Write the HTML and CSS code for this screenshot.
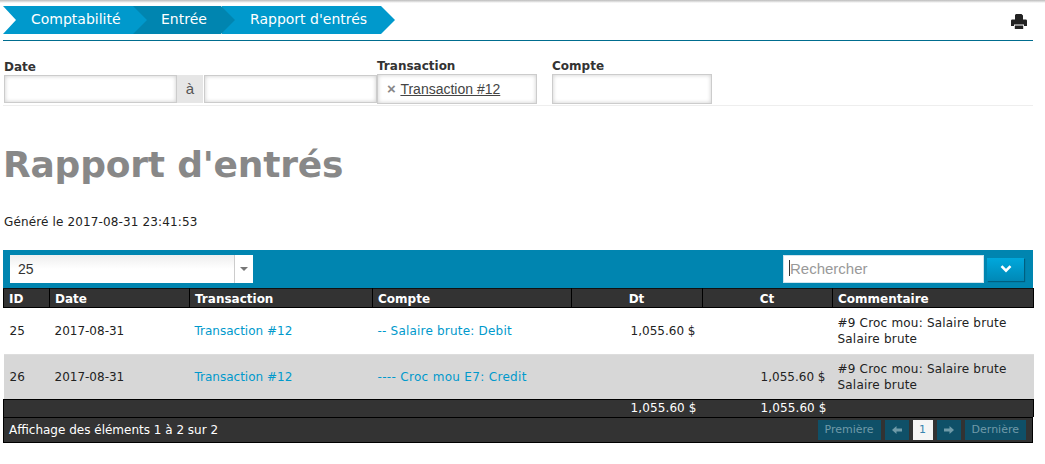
FILE: index.html
```html
<html>

<head>
    <meta charset="UTF-8" />
    <link rel="stylesheet" href="styles.css">
</head>

<body>
    <div id="top-shadow"></div>
    <div id="site">
        <div id="nav">
            <div class="crumbs">
                <a class="crumb crumb-first">Comptabilité</a>
                <a class="crumb crumb-mid">Entrée</a>
                <a class="crumb crumb-last">Rapport d'entrés</a>
            </div>
            <svg class="print" width="16" height="16" viewBox="0 0 16 16">
                <path fill="#222" d="M5 0h5.500L12 1.500V5.500H4V1zM1.200 5.500h13.600c.7 0 1.200.6 1.200 1.300V12h-3v-1.500H3V12H0V6.800c0-.7.5-1.300 1.200-1.300zM3.800 11.500h8.400V15H3.800z" />
            </svg>
        </div>

        <div id="filters">
            <div class="field field-date">
                <label>Date</label>
                <div class="date-group">
                    <div class="box"></div>
                    <span class="addon">à</span>
                    <div class="box"></div>
                </div>
            </div>
            <div class="field field-trans">
                <label>Transaction</label>
                <div class="box box-tag"><span class="tag-x">×</span> <u>Transaction #12</u></div>
            </div>
            <div class="field field-compte">
                <label>Compte</label>
                <div class="box box-tag"></div>
            </div>
        </div>

        <h1>Rapport d'entrés</h1>
        <p class="generated">Généré le 2017-08-31 23:41:53</p>

        <div id="toolbar">
            <div class="length">
                <span class="length-val">25</span>
                <span class="length-arrow"><i></i></span>
            </div>
            <div class="search">
                <div class="search-input"><span class="caret"></span>Rechercher</div>
                <button class="search-btn">
                    <svg width="12" height="8" viewBox="0 0 12 8">
                        <path fill="none" stroke="#fff" stroke-width="2.600" d="M1.500 1.200 6 5.700l4.500-4.500" />
                    </svg>
                </button>
            </div>
        </div>

        <table id="report">
            <colgroup>
                <col class="c-id">
                <col class="c-date">
                <col class="c-trans">
                <col class="c-compte">
                <col class="c-dt">
                <col class="c-ct">
                <col class="c-comm">
            </colgroup>
            <thead>
                <tr>
                    <th>ID</th>
                    <th>Date</th>
                    <th>Transaction</th>
                    <th>Compte</th>
                    <th class="center">Dt</th>
                    <th class="center">Ct</th>
                    <th>Commentaire</th>
                </tr>
            </thead>
            <tbody>
                <tr>
                    <td class="first">25</td>
                    <td>2017-08-31</td>
                    <td><a>Transaction #12</a></td>
                    <td class="wide"><a>-- Salaire brute: Debit</a></td>
                    <td class="num">1,055.60 $</td>
                    <td class="num"></td>
                    <td class="wide">#9 Croc mou: Salaire brute<br>Salaire brute</td>
                </tr>
                <tr class="alt">
                    <td class="first">26</td>
                    <td>2017-08-31</td>
                    <td><a>Transaction #12</a></td>
                    <td class="wider"><a>---- Croc mou E7: Credit</a></td>
                    <td class="num"></td>
                    <td class="num">1,055.60 $</td>
                    <td class="wide">#9 Croc mou: Salaire brute<br>Salaire brute</td>
                </tr>
            </tbody>
            <tfoot>
                <tr>
                    <td></td>
                    <td></td>
                    <td></td>
                    <td></td>
                    <td class="num">1,055.60 $</td>
                    <td class="num">1,055.60 $</td>
                    <td></td>
                </tr>
            </tfoot>
        </table>

        <div id="pager">
            <span>Affichage des éléments 1 à 2 sur 2</span>
            <div class="pages">
                <a class="pg">Première</a>
                <a class="pg pg-icon">
                    <svg width="10" height="10" viewBox="0 0 10 10"><path fill="#6f9aa8" d="M0 5l4.500-4v2.500H10v3H4.500V9z" /></svg>
                </a>
                <a class="pg pg-on">1</a>
                <a class="pg pg-icon">
                    <svg width="10" height="10" viewBox="0 0 10 10"><path fill="#6f9aa8" d="M10 5L5.500 1v2.500H0v3h5.500V9z" /></svg>
                </a>
                <a class="pg">Dernière</a>
            </div>
        </div>
    </div>
</body>

</html>
```

FILE: styles.css
```css
body {
    margin: 0;
    background-color: #fff;
    font-family: 'DejaVu Sans', sans-serif;
    font-size: 12px;
    color: #333;
}

#top-shadow {
    height: 3px;
    background: linear-gradient(#bbb, #fff);
}

#site {
    width: 1030px;
    margin-left: 3px;
}

/* breadcrumb */
#nav {
    display: flex;
    justify-content: space-between;
    align-items: center;
    height: 37px;
    border-bottom: 1px solid #006d8f;
}

.crumbs {
    display: flex;
    margin-bottom: 3px;
}

.crumb {
    display: block;
    height: 28px;
    padding-left: 28px;
    box-sizing: border-box;
    line-height: 26px;
    color: #fff;
    font-size: 14px;
    background-color: #0099cc;
}

.crumb-first {
    z-index: 3;
    width: 144px;
    clip-path: polygon(0 0, 130px 0, 100% 50%, 130px 100%, 0 100%, 13px 50%);
}

.crumb-mid {
    z-index: 2;
    width: 102px;
    margin-left: -14px;
    background-color: #0085b0;
    clip-path: polygon(0 0, 88px 0, 100% 50%, 88px 100%, 0 100%);
}

.crumb-last {
    z-index: 1;
    width: 173px;
    margin-left: -13px;
    clip-path: polygon(0 0, 159px 0, 100% 50%, 159px 100%, 0 100%);
}

.print {
    margin-top: 1px;
    margin-right: 6px;
}

/* filters */
#filters {
    display: flex;
    height: 64px;
    border-bottom: 1px solid #eee;
    padding-left: 1px;
}

.field label {
    display: block;
    height: 14px;
    margin-top: 19px;
    font-weight: bold;
    font-size: 12px;
    line-height: 14px;
    color: #333;
}

.field-trans label,
.field-compte label {
    height: 15px;
    margin-top: 18px;
}

.field-date {
    width: 373px;
}

.field-trans {
    width: 175px;
}

.date-group {
    display: flex;
}

.box {
    box-sizing: border-box;
    width: 173px;
    height: 28px;
    margin-top: 1px;
    border: 1px solid #ccc;
    box-shadow: inset 0 0 4px #ccc;
    background-color: #fff;
}

.addon {
    width: 26px;
    height: 28px;
    margin-top: 1px;
    line-height: 28px;
    text-align: center;
    background-color: #e6e6e6;
    font-family: 'Liberation Sans', sans-serif;
    font-size: 15px;
    color: #555;
}

.date-group .box:last-child {
    margin-left: 1px;
}

.box-tag {
    width: 160px;
    height: 30px;
    margin-top: 0;
    padding-left: 9px;
    font-family: 'Liberation Sans', sans-serif;
    font-size: 14px;
    line-height: 28px;
    color: #444;
}

.tag-x {
    color: #888;
    font-weight: bold;
    font-size: 15px;
    margin-right: 1px;
}

/* title */
h1 {
    margin: 0;
    padding-top: 37px;
    font-size: 36px;
    letter-spacing: -0.2px;
    line-height: 44px;
    color: #888;
}

.generated {
    margin: 0;
    padding-top: 28px;
    padding-left: 1px;
    font-size: 12px;
    letter-spacing: 0.14px;
    line-height: 14px;
    color: #222;
}

/* toolbar */
#toolbar {
    display: flex;
    justify-content: space-between;
    align-items: center;
    height: 38px;
    margin-top: 21px;
    padding: 0 9px 0 7px;
    background-color: #0085b0;
}

.length {
    display: flex;
    justify-content: space-between;
    box-sizing: border-box;
    width: 243px;
    height: 28px;
    background: linear-gradient(#eee, #fff 50%);
    font-family: 'Liberation Sans', sans-serif;
    font-size: 14px;
    line-height: 28px;
}

.length-val {
    padding-left: 8px;
}

.length-arrow {
    display: flex;
    align-items: center;
    justify-content: center;
    width: 18px;
    border-left: 1px solid #ccc;
    background-color: #fff;
}

.length-arrow i {
    border-top: 4px solid #777;
    border-left: 4px solid transparent;
    border-right: 4px solid transparent;
}

.search {
    display: flex;
    align-items: center;
    gap: 3px;
}

.search-input {
    display: flex;
    align-items: center;
    box-sizing: border-box;
    width: 201px;
    height: 28px;
    padding: 0 0 2px 5px;
    border: 1px solid #cfe5ee;
    background-color: #fff;
    font-family: 'Liberation Sans', sans-serif;
    font-size: 15px;
    color: #999;
}

.caret {
    width: 1px;
    height: 16px;
    background-color: #333;
}

.search-btn {
    width: 37px;
    height: 23px;
    padding: 0;
    border: 0;
    background: linear-gradient(#00a8dc, #0088b6);
    box-shadow: 1px 1px 1px #005f80;
}

/* table */
#report {
    width: 1030px;
    table-layout: fixed;
    border-collapse: collapse;
}

.c-id { width: 46px; }
.c-date { width: 140px; }
.c-trans { width: 183px; }
.c-compte { width: 199px; }
.c-dt { width: 131px; }
.c-ct { width: 130px; }
.c-comm { width: 201px; }

#report th {
    height: 19px;
    padding: 1px 0 0 5px;
    background-color: #333;
    border: 1px solid #000;
    border-top: 1px solid #111;
    color: #fff;
    font-weight: bold;
    font-size: 12px;
    text-align: left;
}

#report th.center {
    padding: 1px 1px 0 0;
    text-align: center;
}

#report td {
    padding: 0 0 0 5px;
    font-size: 12px;
    line-height: 16px;
    color: #222;
}

#report td.first {
    padding-left: 6px;
}

#report td.wide {
    letter-spacing: 0.2px;
}

#report td.wider {
    letter-spacing: 0.32px;
}

#report tbody td {
    height: 47px;
    border-bottom: 1px solid #ddd;
}

#report tbody tr.alt td {
    background-color: #d7d7d7;
    border-bottom: 0;
    height: 45px;
}

#report a {
    color: #0099cc;
}

#report td.num {
    text-align: right;
    padding-right: 7px;
}

#report tfoot td {
    height: 17px;
    padding-top: 0;
    background-color: #333;
    border-top: 1px solid #000;
    color: #fff;
    line-height: 16px;
}

#report tfoot td.num {
    padding-right: 6px;
    letter-spacing: 0.1px;
}

#report tfoot td:first-child {
    border-left: 1px solid #000;
}

#report tfoot td:last-child {
    border-right: 1px solid #000;
}

/* pager */
#pager {
    display: flex;
    justify-content: space-between;
    align-items: center;
    box-sizing: border-box;
    height: 26px;
    padding: 0 6px 0 5px;
    background-color: #333;
    border: 1px solid #000;
    color: #fff;
}

.pages {
    display: flex;
    gap: 4px;
}

.pg {
    display: flex;
    align-items: center;
    justify-content: center;
    height: 20px;
    padding: 0 7px;
    background-color: #0f5068;
    color: #6f9aa8;
    font-size: 11px;
}

.pg-icon {
    width: 10px;
}

.pg-on {
    width: 6px;
    background-color: #f5f5f5;
    color: #3a85b0;
}
```
